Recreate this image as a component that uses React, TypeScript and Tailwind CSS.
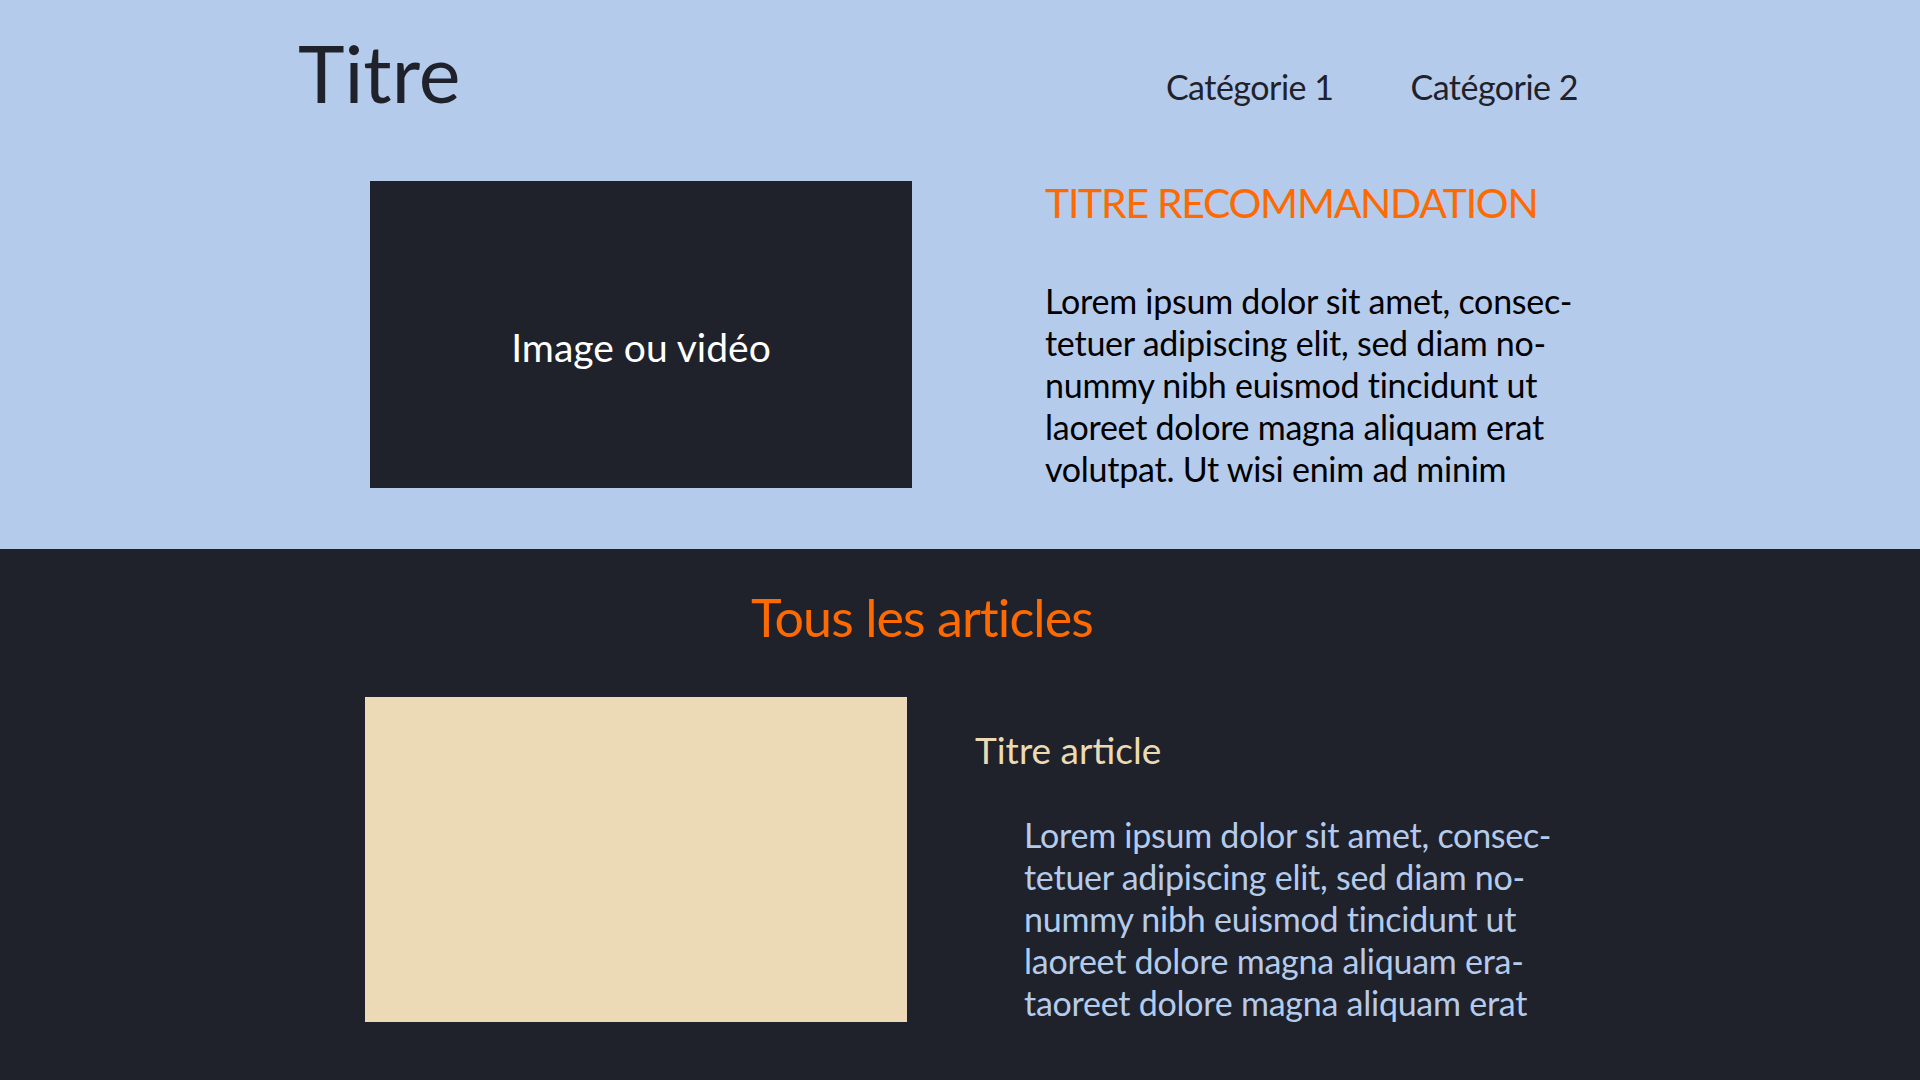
import React from "react";

const recoLines = [
  "Lorem ipsum dolor sit amet, consec-",
  "tetuer adipiscing elit, sed diam no-",
  "nummy nibh euismod tincidunt ut",
  "laoreet dolore magna aliquam erat",
  "volutpat. Ut wisi enim ad minim",
];

const articleLines = [
  "Lorem ipsum dolor sit amet, consec-",
  "tetuer adipiscing elit, sed diam no-",
  "nummy nibh euismod tincidunt ut",
  "laoreet dolore magna aliquam era-",
  "taoreet dolore magna aliquam erat",
];

export default function App() {
  return (
    <div className="w-[1920px] h-[1080px] overflow-hidden font-['Lato',sans-serif]">
      <section className="h-[549px] bg-[#b5cbec]">
        <header className="flex items-start pl-[298px] pr-[342px] pt-[33px]">
          <h1 className="text-[79px] leading-none text-[#1f222b] font-normal">Titre</h1>
          <nav className="ml-auto mt-[37px] flex gap-[77px] text-[34px] leading-none tracking-[-0.5px] text-[#1f222b]">
            <a>Catégorie 1</a>
            <a>Catégorie 2</a>
          </nav>
        </header>
        <div className="mt-[69px] flex items-start pl-[370px]">
          <div className="w-[542px] h-[307px] bg-[#1f222b] flex items-center justify-center pt-[26px] text-white text-[39px] leading-none">
            Image ou vidéo
          </div>
          <div className="ml-[133px] mt-[1px]">
            <h2 className="text-[41px] leading-none tracking-[-1.3px] text-[#ff6a00]">TITRE RECOMMANDATION</h2>
            <p className="mt-[57px] text-[34px] leading-[42px] tracking-[-0.25px] text-black">
              {recoLines.map((l) => (
                <span key={l} className="block whitespace-nowrap">{l}</span>
              ))}
            </p>
          </div>
        </div>
      </section>
      <section className="h-[531px] bg-[#1f222b] pt-[42px]">
        <h2 className="pl-[751px] text-[52px] leading-none tracking-[-0.9px] text-[#ff6a00]">Tous les articles</h2>
        <div className="mt-[54px] flex items-start pl-[365px]">
          <div className="w-[542px] h-[325px] bg-[#ecdab6]" />
          <div className="ml-[68px] pt-[34px]">
            <h3 className="text-[37px] leading-none text-[#ecdab3]">Titre article</h3>
            <p className="mt-[46px] ml-[49px] text-[34px] leading-[42px] tracking-[-0.25px] text-[#b5cbec]">
              {articleLines.map((l) => (
                <span key={l} className="block whitespace-nowrap">{l}</span>
              ))}
            </p>
          </div>
        </div>
      </section>
    </div>
  );
}
